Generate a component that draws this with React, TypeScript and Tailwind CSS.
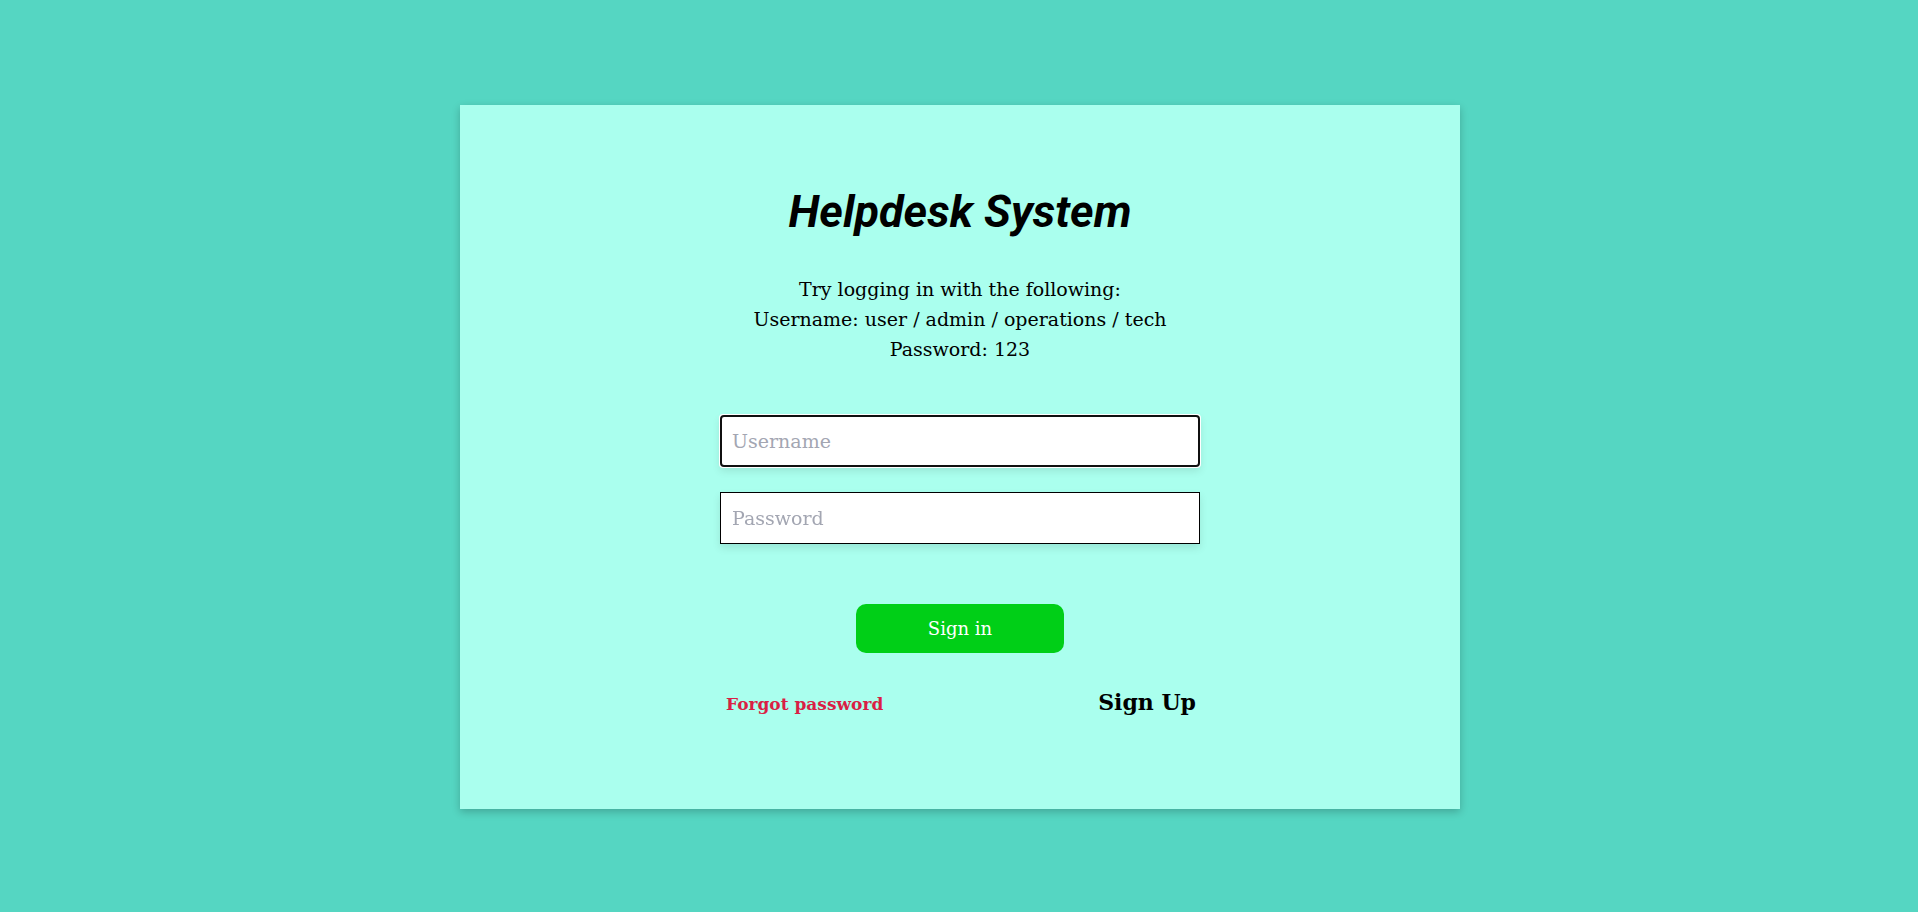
import { useState } from 'react';

export default function App() {
    const [username, setUsername] = useState('');
    const [password, setPassword] = useState('');

    const bodyFont = 'font-["DejaVu_Serif","Liberation_Serif",serif]';

    return (
        <div className={`h-screen w-full bg-[#55d6c2] flex items-center justify-center pl-[2px] pt-[2px] ${bodyFont}`}>
            {/* Login card */}
            <div className="w-[1000px] h-[704px] bg-[#aaffee] shadow-[0_3px_8px_rgba(0,0,0,0.22)] flex flex-col items-center pt-[84px]">
                <h1 className='font-["Roboto",sans-serif] italic font-bold text-[45px] leading-[45px] text-black'>Helpdesk System</h1>

                <div className="mt-[40px] text-center text-[19px] leading-[30px] text-black">
                    <p>Try logging in with the following:</p>
                    <p>Username: user / admin / operations / tech</p>
                    <p>Password: 123</p>
                </div>

                <form className="w-[480px] mt-[51px] flex flex-col" onSubmit={e => e.preventDefault()}>
                    <input
                        autoFocus
                        value={username}
                        onChange={e => setUsername(e.target.value)}
                        placeholder="Username"
                        className="h-[52px] px-[11px] bg-white border border-black text-[19px] text-black placeholder:text-[#a3a6b2] shadow-[0_4px_8px_rgba(0,0,0,0.1)]"
                    />
                    <input
                        type="password"
                        value={password}
                        onChange={e => setPassword(e.target.value)}
                        placeholder="Password"
                        className="mt-[25px] h-[52px] px-[11px] bg-white border border-black text-[19px] text-black placeholder:text-[#a3a6b2] shadow-[0_4px_8px_rgba(0,0,0,0.1)] outline-none"
                    />

                    <button type="submit" className="self-center mt-[60px] w-[208px] h-[49px] rounded-[10px] bg-[#00cf17] text-white text-[18px]">
                        Sign in
                    </button>

                    <div className="mt-[33px] flex items-baseline justify-between pl-[6px] pr-[4px]">
                        <a href="#" className="text-[17px] font-semibold text-[#d91f45]">Forgot password</a>
                        <a href="#" className="text-[22px] font-bold text-black">Sign Up</a>
                    </div>
                </form>
            </div>
        </div>
    );
}
